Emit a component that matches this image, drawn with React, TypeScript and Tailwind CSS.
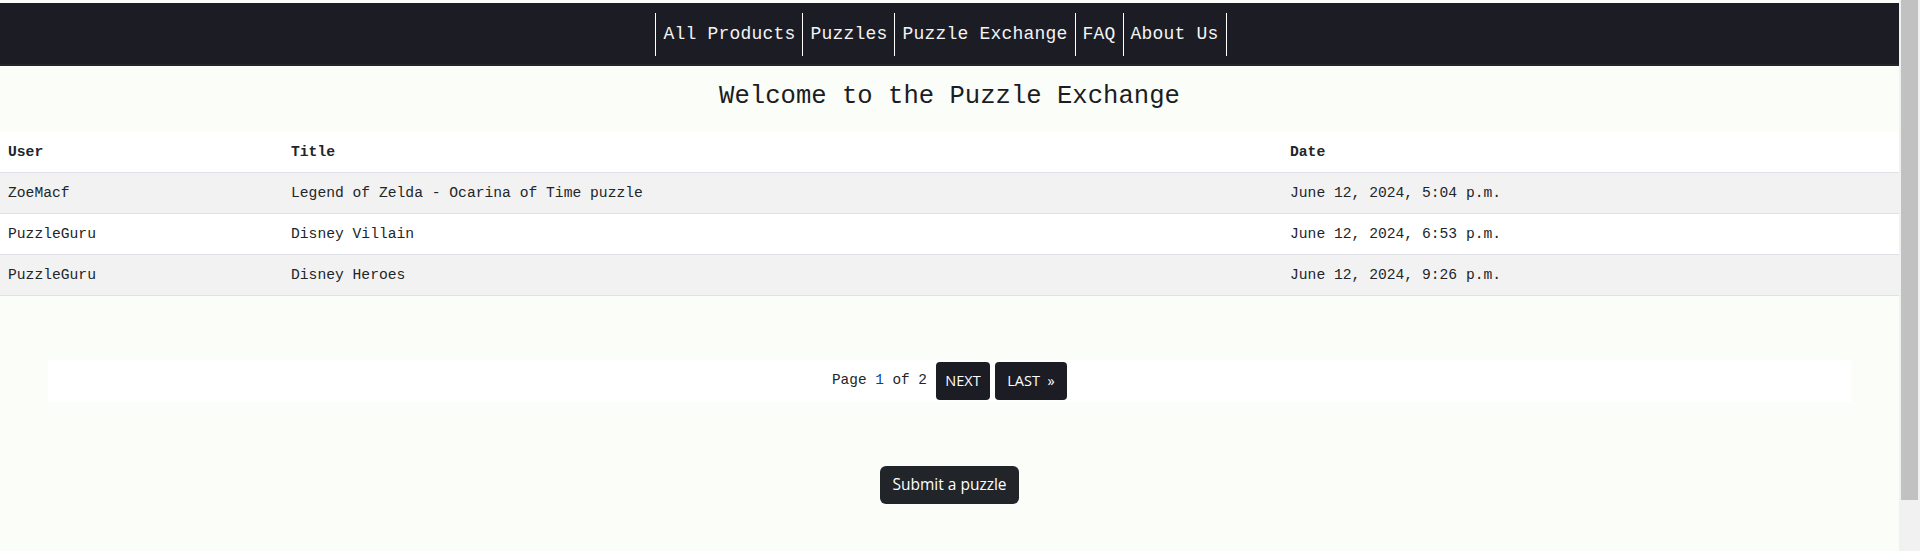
const navLinks = ["All Products", "Puzzles", "Puzzle Exchange", "FAQ", "About Us"];

const posts = [
  { user: "ZoeMacf", title: "Legend of Zelda - Ocarina of Time puzzle", date: "June 12, 2024, 5:04 p.m." },
  { user: "PuzzleGuru", title: "Disney Villain", date: "June 12, 2024, 6:53 p.m." },
  { user: "PuzzleGuru", title: "Disney Heroes", date: "June 12, 2024, 9:26 p.m." },
];

const mono = "font-['Liberation_Mono','DejaVu_Sans_Mono',monospace]";

export default function App() {
  return (
    <div className="flex h-[551px] overflow-hidden bg-[#fbfdf8]">
      <div className="min-w-0 flex-1 pt-[3px]">
        {/* top nav */}
        <nav className="flex h-[63px] items-center justify-center border-b-2 border-[#24252d] bg-[#1b1c24] pt-[2px]">
          <ul className="mr-[17px] flex h-[43px]">
            {navLinks.map((link, i) => (
              <li
                key={link}
                className={`flex items-center border-l border-white px-[7px] text-[18px] tracking-[0.2px] text-[#f4f4f4] ${mono} ${
                  i === navLinks.length - 1 ? "border-r" : ""
                }`}
              >
                {link}
              </li>
            ))}
          </ul>
        </nav>

        <h1 className={`pt-[16px] pb-[20px] text-center text-[25.6px] leading-[30px] text-[#1b1c24] ${mono}`}>
          Welcome to the Puzzle Exchange
        </h1>

        {/* exchange list */}
        <table className={`w-full table-fixed border-collapse bg-white text-[14.67px] leading-6 text-[#212529] ${mono}`}>
          <thead>
            <tr className="border-b border-[#dee2e6]">
              <th className="w-[283px] px-2 py-2 text-left font-bold">User</th>
              <th className="w-[999px] px-2 py-2 text-left font-bold">Title</th>
              <th className="px-2 py-2 text-left font-bold">Date</th>
            </tr>
          </thead>
          <tbody>
            {posts.map((p, i) => (
              <tr key={p.title} className={`border-b border-[#dee2e6] ${i % 2 === 0 ? "bg-[#f2f2f2]" : "bg-white"}`}>
                <td className="px-2 py-2">{p.user}</td>
                <td className="px-2 py-2">{p.title}</td>
                <td className="px-2 py-2">{p.date}</td>
              </tr>
            ))}
          </tbody>
        </table>

        {/* pagination */}
        <div className="mx-[48px] mt-[64px] flex h-[42px] items-center justify-center bg-white">
          <span className={`mr-[9px] text-[14.4px] text-[#212529] ${mono}`}>
            Page <span className="text-[#0d3b9e]">1</span> of 2
          </span>
          <button className="mr-[5px] h-[38px] w-[54px] rounded bg-[#1b1c24] font-['Open_Sans',sans-serif] text-[14.5px] text-white">
            NEXT
          </button>
          <button className="h-[38px] w-[72px] rounded bg-[#1b1c24] font-['Open_Sans',sans-serif] text-[14.5px] text-white">
            LAST&nbsp;&nbsp;&raquo;
          </button>
        </div>

        <div className="mt-[64px] flex justify-center">
          <button className="h-[38px] w-[139px] rounded-md bg-[#212529] font-['Open_Sans',sans-serif] text-[15.5px] text-white">
            Submit a puzzle
          </button>
        </div>
      </div>

      {/* scrollbar */}
      <div className="w-[21px] shrink-0 bg-[#f1f1f1] px-[2px]">
        <div className="h-[500px] bg-[#c1c1c1]" />
      </div>
    </div>
  );
}
